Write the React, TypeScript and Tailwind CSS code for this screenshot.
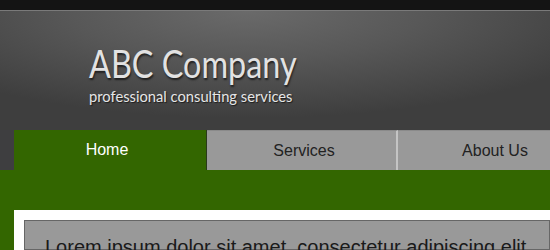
export default function App() {
  const tabs = [
    { label: "Home", active: true },
    { label: "Services", active: false },
    { label: "About Us", active: false },
  ]

  return (
    <div className="w-[550px] h-[250px] overflow-hidden bg-[#336600] font-['Liberation_Sans',Arial,sans-serif]">
      <div className="h-[10px] bg-[#141414]" />
      <div className="h-px bg-[#7a7a7a]" />
      <header className="h-[119px] bg-[radial-gradient(ellipse_70%_90%_at_45%_0%,#6a6a6a_0%,#585858_45%,#3e3e3e_100%)] pl-[89px] pt-[30px]">
        <h1 className="block w-fit origin-left scale-x-[0.83] font-['Lato',sans-serif] text-[39px] leading-[44px] text-[#e2e2e2] [text-shadow:1px_2px_2px_rgba(0,0,0,0.6)] whitespace-nowrap">
          ABC Company
        </h1>
        <p className="w-fit origin-left scale-x-[0.92] mt-[2px] font-['Lato',sans-serif] text-[16px] leading-[18px] text-[#e6e6e6] [text-shadow:1px_1px_1px_rgba(0,0,0,0.6)] whitespace-nowrap">
          professional consulting services
        </p>
      </header>
      <nav className="flex h-[40px] bg-[#336600]">
        <div className="w-[14px] shrink-0 bg-[#3e3e40]" />
        {tabs.map(t => (
          <div
            key={t.label}
            className={
              t.active
                ? "w-[193px] shrink-0 flex items-center justify-center pr-[6px] text-[16px] text-white bg-[#336600] border-r border-[#2a3a1a]"
                : "w-[191px] shrink-0 flex items-center justify-center pl-[5px] text-[16px] text-[#222] bg-[#999] border-r-2 border-[#c4c4c4] border-t border-t-[#8a8a8a]"
            }
          >
            {t.label}
          </div>
        ))}
      </nav>
      <div className="h-[40px]" />
      <div className="ml-[14px] bg-white pt-[10px] pl-[10px] h-[40px]">
        <div className="h-full bg-[#999] border border-[#666] pl-[20px] pt-[14px] text-[20px] leading-[24px] text-[#1a1a1a] whitespace-nowrap">
          Lorem ipsum dolor sit amet, consectetur adipiscing elit
        </div>
      </div>
    </div>
  )
}
